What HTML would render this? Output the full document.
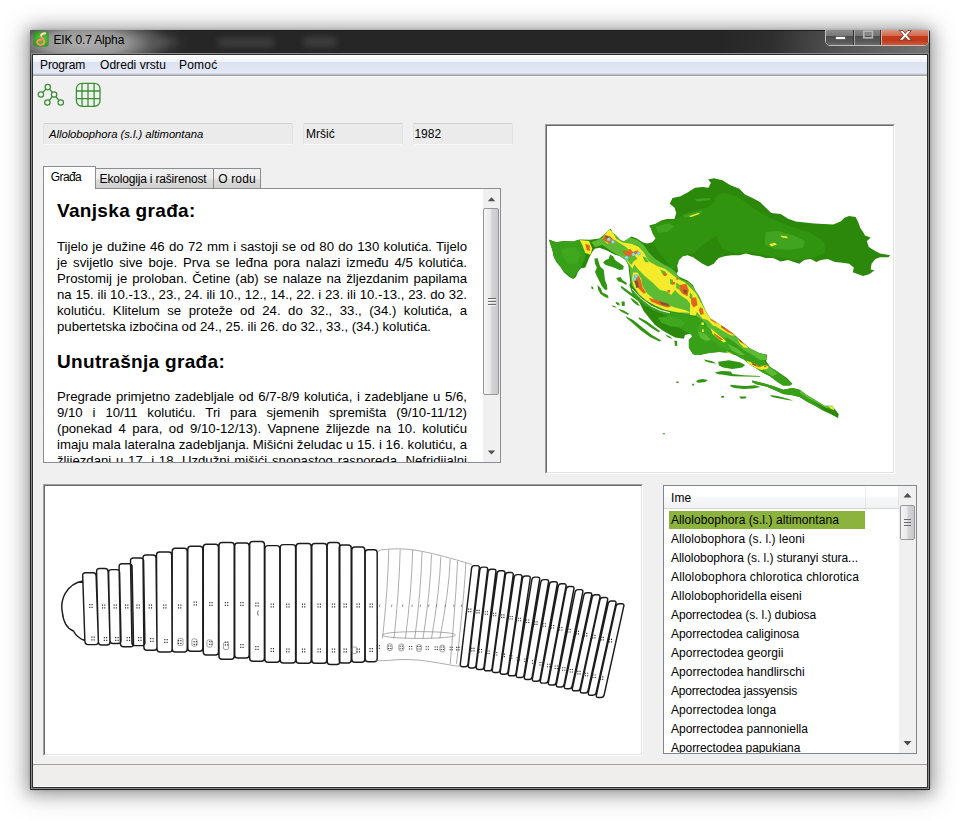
<!DOCTYPE html>
<html lang="hr">
<head>
<meta charset="utf-8">
<title>EIK 0.7 Alpha</title>
<style>
html,body{margin:0;padding:0;}
body{width:960px;height:821px;background:#fff;position:relative;overflow:hidden;font-family:"Liberation Sans",sans-serif;font-size:12px;color:#000;}
.abs{position:absolute;}
#shadow{left:31px;top:31px;width:898px;height:758px;box-shadow:0 0 3px 1px rgba(0,0,0,.18),0 1px 16px 4px rgba(0,0,0,.31),0 2px 30px 5px rgba(0,0,0,.16);border-radius:2px 2px 1px 1px;}
#win{left:30px;top:30px;width:900px;height:760px;background:#1f1f1f;border-radius:2px 2px 1px 1px;overflow:hidden;}
#frame2{left:1px;top:23px;width:896px;height:734px;border:1px solid #8c8c8c;}
#titlebar{left:1px;top:1px;width:898px;height:22px;background:#262626;border-radius:1px 1px 0 0;overflow:hidden;}
#glow{left:-50px;top:-18px;width:210px;height:62px;background:radial-gradient(closest-side at 50% 50%,rgba(188,188,188,.92) 0,rgba(165,165,165,.88) 40%,rgba(120,120,120,.68) 62%,rgba(70,70,70,.3) 84%,rgba(38,38,38,0) 100%);}
.smudge{background:#444;filter:blur(3px);border-radius:4px;}
#title{left:23.5px;top:3px;font-size:12px;letter-spacing:-.16px;color:#000;white-space:nowrap;}
#client{left:3px;top:25px;width:894px;height:732px;background:#f0f0f0;box-shadow:inset 1px 0 0 #fafafa,inset -1px 0 0 #fafafa;}
#client:after{content:"";position:absolute;left:0;bottom:0;width:894px;height:1px;background:#fff;}
#menubar{left:0;top:0;width:894px;height:22px;background:linear-gradient(to bottom,#fff 0,#f9fafd 3px,#eff2fa 7px,#dde2f2 7px,#e0e5f4 13px,#e6e9f6 18px,#d3d7e3 18px,#d3d7e3 19px,#bfc3cf 19px,#bfc3cf 20px,#a2a2a2 20px,#a2a2a2 21px,#f9f9f9 21px,#f9f9f9 22px);}
.mi{top:3px;font-size:12px;white-space:nowrap;letter-spacing:-.12px;}
.field{top:68px;height:22px;border:1px solid #e2e2e2;border-top-color:#cfcfcf;border-bottom-color:#f8f8f8;background:#ebebeb;box-sizing:border-box;border-radius:2px;line-height:20px;padding-left:5px;white-space:nowrap;}
.tab{box-sizing:border-box;border:1px solid #898c95;border-bottom:none;background:linear-gradient(#f2f2f2,#ebebeb 48%,#dddddd 52%,#cfcfcf);font-size:12px;white-space:nowrap;text-align:center;}
#textbox{left:10px;top:133px;width:458px;height:275px;background:#fff;border:1px solid #8a8d94;box-sizing:border-box;overflow:hidden;}
#text{left:13px;top:0;width:410px;font-size:13.2px;line-height:16px;}
#text h2{font-size:19px;letter-spacing:.32px;margin:0;font-weight:bold;line-height:22px;text-align:left;height:22px;}
#text p{margin:0;height:16px;text-align:justify;text-align-last:justify;white-space:nowrap;}
#text p.l{text-align-last:left;}
.sb{background:#f0f0f0;}
.thumb{box-sizing:border-box;border:1px solid #979797;border-radius:2px;background:linear-gradient(to right,#f5f5f5 0,#e9e9eb 45%,#d5d5d8 55%,#c8c8cc 100%);}
.sunken{box-sizing:border-box;border-style:solid;border-width:1px;border-color:#a0a0a0 #fff #fff #a0a0a0;}
.sunken>.in{position:absolute;left:0;top:0;right:0;bottom:0;box-sizing:border-box;border-style:solid;border-width:1px;border-color:#696969 #e3e3e3 #e3e3e3 #696969;background:#fff;overflow:hidden;}
#list{left:630px;top:430px;width:254px;height:269px;box-sizing:border-box;border:1px solid #828790;background:#fff;overflow:hidden;}
.li{left:7px;font-size:12px;white-space:nowrap;height:19px;line-height:18px;letter-spacing:.12px;}
#status{left:0;top:709px;width:894px;height:23px;background:#f0eeed;border-top:1px solid #a0a0a0;box-sizing:border-box;}
</style>
</head>
<body>
<div id="shadow" class="abs"></div>
<div id="win" class="abs">
 <div id="titlebar" class="abs">
  <div class="abs" style="left:690px;top:0;width:208px;height:22px;background:linear-gradient(100deg,rgba(110,110,110,0) 0,rgba(110,110,110,.12) 25%,rgba(110,110,110,.6) 55%,rgba(118,118,118,.95) 100%)"></div>
  <div class="abs smudge" style="left:124px;top:7px;width:22px;height:9px;opacity:.7"></div>
  <div class="abs smudge" style="left:187px;top:7px;width:56px;height:9px;opacity:.8"></div>
  <div class="abs smudge" style="left:272px;top:6px;width:34px;height:10px;opacity:.8"></div>
 </div>
 <div id="glow" class="abs"></div>
 <div id="frame2" class="abs"></div>
 <div class="abs" style="left:795px;top:-4px;width:104px;height:20px;border:1px solid #c0c0c0;border-radius:0 0 5px 5px;box-sizing:border-box;overflow:hidden;background:#444">
<div class="abs" style="left:0;top:0;width:102px;height:18px;border-radius:0 0 4px 4px;overflow:hidden;background:#333">
<div class="abs" style="left:0;top:0;width:27px;height:18px;background:linear-gradient(#a0a0a0 0,#8a8a8a 20%,#787878 48%,#4c4c4c 52%,#565656 80%,#6a6a6a 100%)"></div>
<div class="abs" style="left:28px;top:0;width:26px;height:18px;background:linear-gradient(#999 0,#868686 20%,#747474 48%,#4e4e4e 52%,#585858 80%,#6c6c6c 100%);border-left:1px solid #a4a4a4;box-sizing:border-box"></div>
<div class="abs" style="left:55px;top:0;width:47px;height:18px;background:linear-gradient(#e3a896 0,#d98a75 25%,#d2694f 48%,#c23c1c 52%,#c03a1a 75%,#d25a38 100%);border-left:1px solid #e8b0a0;box-sizing:border-box"></div>
</div>
<svg class="abs" style="left:0;top:0" width="102" height="18"><rect x="9.5" y="9.5" width="10" height="3" fill="#fff" stroke="#3a3a3a" stroke-width=".6"/><rect x="37.8" y="4.2" width="8.6" height="6.6" fill="none" stroke="#b4b4b4" stroke-width="1.7"/><rect x="39.5" y="6.3" width="5.2" height="2.2" fill="#8c8c8c"/><path d="M73.3 3.6h3.6l2.4 2.9 2.4-2.9h3.6l-4.2 4.7 4.4 4.9h-3.7l-2.5-3-2.5 3h-3.7l4.4-4.9z" fill="#fff" stroke="#5a2a20" stroke-width=".8"/></svg>
</div>
<svg class="abs" style="left:2.6px;top:1.3px" width="16.2" height="16" viewBox="0 0 16 16"><defs><radialGradient id="ig" cx="55%" cy="50%" r="60%"><stop offset="0" stop-color="#6ed052"/><stop offset=".6" stop-color="#3fae31"/><stop offset="1" stop-color="#2f9228"/></radialGradient></defs><rect x=".3" y=".3" width="15.4" height="15.4" rx="3.5" fill="url(#ig)"/><path d="M11.6 2.5C8.8 2.1 7.2 3.9 8.4 5.8 9.8 7.9 11.9 9.3 11.2 11.6 10.4 14.3 5.3 14.6 4.2 12.2 3.3 10.1 5.6 8.1 7.8 8.9" fill="none" stroke="#8a5a28" stroke-width="2.7" stroke-linecap="round" opacity=".55"/><path d="M11.6 2.5C8.8 2.1 7.2 3.9 8.4 5.8 9.8 7.9 11.9 9.3 11.2 11.6 10.4 14.3 5.3 14.6 4.2 12.2 3.3 10.1 5.6 8.1 7.8 8.9" fill="none" stroke="#f2a25c" stroke-width="1.9" stroke-linecap="round"/><path d="M11.6 2.5C9.4 2.2 8 3.2 8 4.6" fill="none" stroke="#fbeccd" stroke-width="1.8" stroke-linecap="round"/><circle cx="12.3" cy="2.4" r=".8" fill="#fff8e0"/></svg>
 <div id="title" class="abs">EIK 0.7 Alpha</div>
 <div class="abs" style="left:2px;top:24px;width:896px;height:734px;background:#2e2e2e"></div>
 <div id="client" class="abs">
  <div id="menubar" class="abs"></div>
  <div class="abs mi" style="left:7px">Program</div>
  <div class="abs mi" style="left:67px;letter-spacing:.05px">Odredi vrstu</div>
  <div class="abs mi" style="left:146px;letter-spacing:.2px">Pomoć</div>
  <svg class="abs" style="left:0;top:22px" width="80" height="34" viewBox="33 77 80 34"><g fill="#eef7ec" stroke="#3f8d39" stroke-width="1.25"><path d="M47.8 87.1L40.9 94.5M47.8 87.1L54.1 94.5L47.4 102.5M54.1 94.5L60.75 102.5" fill="none"/><circle cx="47.8" cy="87.1" r="2.7"/><circle cx="40.9" cy="94.5" r="2.7"/><circle cx="54.1" cy="94.5" r="2.7"/><circle cx="47.4" cy="102.5" r="2.7"/><circle cx="60.75" cy="102.5" r="2.7"/></g><g fill="none" stroke="#3f8d39" stroke-width="1.3"><rect x="76.4" y="83.3" width="23.6" height="23" rx="5.5" fill="#edf6eb"/><path d="M82 83.3v23M88 83.3v23M94.1 83.3v23M76.4 91h23.6M76.4 98.7h23.6"/></g></svg>

  <div class="abs field" style="left:10px;width:250px;font-style:italic;font-size:11.3px;letter-spacing:-.05px">Allolobophora (s.l.) altimontana</div>
  <div class="abs field" style="left:270px;width:100px;font-size:12px;padding-left:2px">Mršić</div>
  <div class="abs field" style="left:380px;width:100px;font-size:12px;padding-left:.4px">1982</div>

  <div class="abs tab" style="left:62px;top:113px;width:119px;height:21px;line-height:20px;letter-spacing:-.18px;padding-right:3px">Ekologija i raširenost</div>
  <div class="abs tab" style="left:180px;top:113px;width:48px;height:21px;line-height:20px;letter-spacing:.15px">O rodu</div>
  <div id="textbox" class="abs">
   <div id="text" class="abs">
    <h2 style="margin-top:11px">Vanjska građa:</h2>
    <div style="height:16.6px"></div>
    <p>Tijelo je dužine 46 do 72 mm i sastoji se od 80 do 130 kolutića. Tijelo</p>
    <p>je svijetlo sive boje. Prva se leđna pora nalazi između 4/5 kolutića.</p>
    <p>Prostomij je proloban. Četine (ab) se nalaze na žljezdanim papilama</p>
    <p>na 15. ili 10.-13., 23., 24. ili 10., 12., 14., 22. i 23. ili 10.-13., 23. do 32.</p>
    <p>kolutiću. Klitelum se proteže od 24. do 32., 33., (34.) kolutića, a</p>
    <p class="l">pubertetska izbočina od 24., 25. ili 26. do 32., 33., (34.) kolutića.</p>
    <h2 style="margin-top:16px">Unutrašnja građa:</h2>
    <div style="height:16.3px"></div>
    <p>Pregrade primjetno zadebljale od 6/7-8/9 kolutića, i zadebljane u 5/6,</p>
    <p>9/10 i 10/11 kolutiću. Tri para sjemenih spremišta (9/10-11/12)</p>
    <p>(ponekad 4 para, od 9/10-12/13). Vapnene žlijezde na 10. kolutiću</p>
    <p>imaju mala lateralna zadebljanja. Mišićni želudac u 15. i 16. kolutiću, a</p>
    <p>žlijezdani u 17. i 18. Uzdužni mišići snopastog rasporeda. Nefridijalni</p>
    <p class="l">mjehuri U-oblika.</p>
   </div>
   <div class="abs sb" style="left:439px;top:0;width:17px;height:273px"></div>
   <div class="abs thumb" style="left:439px;top:19px;width:16px;height:187px"></div>
   <svg class="abs" style="left:439px;top:0" width="17" height="273"><path d="M4.8 12.3L8.5 8.2 12.2 12.3z M4.8 261.4L12.2 261.4 8.5 265.5z" fill="#505050"/><path d="M5 109.5h8M5 112.5h8M5 115.5h8" stroke="#6b6b6b" stroke-width="1"/><path d="M5 110.5h8M5 113.5h8M5 116.5h8" stroke="#fff" stroke-width="1" opacity=".7"/></svg>
  </div>
  <div class="abs tab" style="left:10px;top:111px;width:53px;height:23px;line-height:20px;background:#fff;letter-spacing:-.6px;padding-right:7px">Građa</div>

  <div class="abs sunken" style="left:512px;top:69px;width:350px;height:350px"><div class="in"><svg class="abs" style="left:0;top:0" width="346" height="346" viewBox="547 126 346 346"><defs><clipPath id="cl"><path d="M548.8 239.4L556.3 242.2L563.8 240.9L573.1 241.6L579.7 239.4L590 239.8L599.4 238.4L603.1 235.6L606.9 231.9L610.6 228.7L612.9 232.8L616.3 235.6L620 239.8L623.8 241.6L628.4 238.4L631.6 236.6L636.9 238.4L642.5 242.2L647.2 243.5L652.3 242.2L655.6 238.4L652.8 233.8L650.9 228.5L649.1 225.5L655.6 223.8L661.3 220.6L666.9 219.1L674.4 219.1L676.3 213.1L674.4 207.5L669.7 203.8L672.5 198.1L680 196.6L687.5 192.5L695 187.8L702.5 186.9L708.5 187.8L710.9 182.8L708.1 179.4L713.8 178.3L715 178.4L722.5 180.3L730 185L739.4 188.8L745 194.4L752.5 198.1L760 201.9L765.6 207.5L771.3 213.1L780.6 214.1L788.1 218.8L795.6 221.6L805 222.5L814.4 223.4L823.8 224L833.1 224.4L840.6 221.6L844.4 217.8L849.1 215.9L855.6 216.9L858.4 222.5L860.3 228.1L863.1 231.9L865 235.6L870.6 237.5L866.9 241.3L868.8 246.9L874.4 250.6L880 253.4L890.3 255.3L888.4 257.2L880 257.2L875.3 259.1L871.6 263.8L870.6 269.4L874.4 270.3L869.7 274.1L863.1 275.9L857.5 274.1L852.8 272.2L853.8 267.5L849.1 263.8L842.5 262.8L835 261.9L827.5 259.1L820.9 260L816.3 261.9L810.6 259.1L804.1 260L799.4 263.8L793.8 261.9L788.1 260L780.6 261.5L773.1 258.1L765.6 258.1L760 256.3L752.5 255.3L745.9 253.4L739.4 255.3L731.9 255.3L724.4 256.3L718.8 258.1L715 261.9L713.8 263.8L708.1 266.6L702.5 263.8L696.9 260L693.1 257.2L687.5 255.3L682.8 256.3L679.1 260L677.2 265.6L678.1 271.3L676.3 274.1L680 277.3L687.5 280.6L693.1 285.3L695 290L698.8 295.6L701.6 301.3L704.4 308.8L708.1 316.3L698.8 295.6L704.4 308.8L710 318.1L721.3 325.6L732.5 333.1L741.9 341.6L749.4 348.1L758.8 352.8L767.2 354.7L766.3 361.3L770 366.9L777.5 371.6L786.9 378.1L792.5 383.8L789.7 385.6L783.1 385.6L777.5 381.9L770 376.3L762.5 372.5L756.9 368.8L749.4 364.1L743.8 359.4L736.3 355.6L728.8 352.8L719.4 351.9L710 352.8L700.6 354.7L695 354.7L695 355L692.5 353.8L688.8 347.5L688.8 340L692.5 336.2L690 333.8L685 335L683.8 338.8L675 337.5L663.8 331.2L655 325L648.8 317.5L643.8 311.2L638.8 301.2L632.5 293.8L629.4 285L630.3 282.5L629.4 275L628.4 265.6L625.6 260L620 256.3L614.4 254.4L606.9 250.6L599.4 247.8L594.7 248.8L591.9 252.5L589.1 258.1L587.2 262.8L585.3 267.5L580.6 268.4L577.8 272.2L575.9 276.9L573.1 279.1L569.4 276.9L563.8 272.2L560.9 267.5L556.3 261.9L553.4 256.3L552.5 250.6L550.6 245ZM752.2 380.6L760.6 382.4L773.8 386.2L783.1 389.8L792.5 387.9L800 389.8L806 394.4L815.4 400.1L824.4 405.7L831.9 405.7L835.1 409.6L838.8 414.3L837.9 417.9L830 413.8L822.5 410.2L815 405.7L807.5 401.9L800 397.3L792.5 395.2L783.1 393.9L775.6 390.5L766.3 386.6L756.9 384.5L752.2 382.3Z"/></clipPath></defs><path d="M548.8 239.4L556.3 242.2L563.8 240.9L573.1 241.6L579.7 239.4L590 239.8L599.4 238.4L603.1 235.6L606.9 231.9L610.6 228.7L612.9 232.8L616.3 235.6L620 239.8L623.8 241.6L628.4 238.4L631.6 236.6L636.9 238.4L642.5 242.2L647.2 243.5L652.3 242.2L655.6 238.4L652.8 233.8L650.9 228.5L649.1 225.5L655.6 223.8L661.3 220.6L666.9 219.1L674.4 219.1L676.3 213.1L674.4 207.5L669.7 203.8L672.5 198.1L680 196.6L687.5 192.5L695 187.8L702.5 186.9L708.5 187.8L710.9 182.8L708.1 179.4L713.8 178.3L715 178.4L722.5 180.3L730 185L739.4 188.8L745 194.4L752.5 198.1L760 201.9L765.6 207.5L771.3 213.1L780.6 214.1L788.1 218.8L795.6 221.6L805 222.5L814.4 223.4L823.8 224L833.1 224.4L840.6 221.6L844.4 217.8L849.1 215.9L855.6 216.9L858.4 222.5L860.3 228.1L863.1 231.9L865 235.6L870.6 237.5L866.9 241.3L868.8 246.9L874.4 250.6L880 253.4L890.3 255.3L888.4 257.2L880 257.2L875.3 259.1L871.6 263.8L870.6 269.4L874.4 270.3L869.7 274.1L863.1 275.9L857.5 274.1L852.8 272.2L853.8 267.5L849.1 263.8L842.5 262.8L835 261.9L827.5 259.1L820.9 260L816.3 261.9L810.6 259.1L804.1 260L799.4 263.8L793.8 261.9L788.1 260L780.6 261.5L773.1 258.1L765.6 258.1L760 256.3L752.5 255.3L745.9 253.4L739.4 255.3L731.9 255.3L724.4 256.3L718.8 258.1L715 261.9L713.8 263.8L708.1 266.6L702.5 263.8L696.9 260L693.1 257.2L687.5 255.3L682.8 256.3L679.1 260L677.2 265.6L678.1 271.3L676.3 274.1L680 277.3L687.5 280.6L693.1 285.3L695 290L698.8 295.6L701.6 301.3L704.4 308.8L708.1 316.3L698.8 295.6L704.4 308.8L710 318.1L721.3 325.6L732.5 333.1L741.9 341.6L749.4 348.1L758.8 352.8L767.2 354.7L766.3 361.3L770 366.9L777.5 371.6L786.9 378.1L792.5 383.8L789.7 385.6L783.1 385.6L777.5 381.9L770 376.3L762.5 372.5L756.9 368.8L749.4 364.1L743.8 359.4L736.3 355.6L728.8 352.8L719.4 351.9L710 352.8L700.6 354.7L695 354.7L695 355L692.5 353.8L688.8 347.5L688.8 340L692.5 336.2L690 333.8L685 335L683.8 338.8L675 337.5L663.8 331.2L655 325L648.8 317.5L643.8 311.2L638.8 301.2L632.5 293.8L629.4 285L630.3 282.5L629.4 275L628.4 265.6L625.6 260L620 256.3L614.4 254.4L606.9 250.6L599.4 247.8L594.7 248.8L591.9 252.5L589.1 258.1L587.2 262.8L585.3 267.5L580.6 268.4L577.8 272.2L575.9 276.9L573.1 279.1L569.4 276.9L563.8 272.2L560.9 267.5L556.3 261.9L553.4 256.3L552.5 250.6L550.6 245ZM752.2 380.6L760.6 382.4L773.8 386.2L783.1 389.8L792.5 387.9L800 389.8L806 394.4L815.4 400.1L824.4 405.7L831.9 405.7L835.1 409.6L838.8 414.3L837.9 417.9L830 413.8L822.5 410.2L815 405.7L807.5 401.9L800 397.3L792.5 395.2L783.1 393.9L775.6 390.5L766.3 386.6L756.9 384.5L752.2 382.3Z" fill="#2b880a"/><path d="M718.1 361.8L728.8 360.3L740 362.2L745.1 365L742.3 367.6L732.5 368.9L723.1 367.4L719 365.4ZM704.4 359.8L711.9 360.9L715.6 363.5L710.9 363.1L705.3 361.3ZM715.6 372.5L723.1 371L730.6 371.6L732.5 374L743.8 375.3L760.6 375.9L759.7 376.8L743.8 376.6L732.5 376.3L723.1 374.8L716.6 373.8ZM696.9 380L702.5 379.1L707.8 380L705.3 381.9L699.7 382.4ZM730.3 384.7L738.1 385.6L745.6 386L755 385.3L760.6 387.1L753.1 388.4L743.8 389L734.4 387.9L730.6 386.6ZM739.1 396.5L746.6 396.5L745.6 398.4L740.9 398.8ZM770 395L777.5 395.9L786.9 398.4L793.4 400.6L788.8 400.3L779.4 398.4L771.9 396.9ZM721.8 396.3L723.5 396.3L723.5 397.6L721.8 397.6ZM610 254.4L613.1 256.2L615 260L619.4 263.1L623.8 266.2L623.1 269.4L619.4 270L615 268.1L610 266.2L605.6 265L603.1 262.5L605.6 260L608.8 258.8ZM594.4 258.8L597.5 258.1L598.8 261.9L600 266.2L603.8 270L604.4 275L605 280L606.9 285L607.5 289.4L605 290L601.9 286.2L599.4 281.2L596.9 276.2L595 271.9L596.9 267.5L595 263.8ZM597.5 285L600.6 288.1L602.5 292.5L607.5 295L608.8 297.5L605 296.9L601.2 293.8L598.1 290ZM616.2 278.1L620.6 276.9L622.5 280L626.9 283.1L626.2 285L621.9 282.5L618.1 281.2ZM620.6 285.6L624.4 288.1L628.8 291.2L632.5 293.8L637.5 297.5L642.5 301.2L647.5 305.6L645 306.2L640 302.5L635 298.8L630 295L625 291.2L621.2 288.1ZM630 297.5L633.8 299.4L637.5 302.5L640 306.2L636.9 305L633.1 301.9ZM591.2 286.2L593.1 286.9L593.5 289.4L591.5 288.8ZM615.6 301.9L618.1 302.5L618.5 304.4L616.2 304ZM621.9 301.9L624 301.5L624.4 305L622.2 305ZM611.2 305L615 306.2L616.9 307.5L613.8 307.2ZM618.1 308.8L622.5 310.6L627.5 313.1L629.4 314.4L625 313.5L620.6 311.2ZM625.6 316.3L633.1 320L642.5 327.5L651.9 335L661.3 340.6L659.4 341.6L650 336.9L640.6 330.3L632.2 322.8L626.6 318.1ZM638.8 317.2L646.3 320.9L653.8 326.6L660.3 331.3L658.4 332.2L650.9 327.5L644.4 322.8L638.8 319.1ZM618.1 308.8L623.8 310.6L629.4 314L627.5 314.8L621.9 312.1ZM616.3 302.2L619.1 302.8L619.6 305.4L617.2 305ZM621.5 301.6L624.7 301.6L624.7 305.9L621.9 305.9ZM598.4 290L601.3 291.9L606.9 295.6L607.8 298.4L604.1 296.6L600.3 293.8ZM674.4 340.6L677.2 341L677.2 346.3L674.8 345.5ZM665 334.1L670.6 336.9L672.5 339.1L667.8 337.3ZM695.9 380.9L702.5 379.1L707.8 380L704.4 382.3L697.8 382.8ZM676.3 381.5L678.5 381.5L678.5 383L676.3 383ZM692.2 383.8L694.1 383.8L694.1 385.6L692.2 385.6ZM704.4 359.4L711.9 361.3L716.6 363.5L710 362.8L705.3 360.9ZM714.7 372.5L721.3 371L725 371.8L725 374.4L719.4 374.4ZM662.2 433.4L665 432.9L664.3 434.8ZM721.3 395.9L724.1 395.9L724.1 397.8L721.3 397.8Z" fill="#319612"/><g clip-path="url(#cl)"><path d="M650 226.3L661.3 221.6L674.4 220.3L683.8 214.1L695 210.3L708.1 207.5L719.4 198.1L725 198.1L725 231.9L713.8 237.5L702.5 245L695 252.5L687.5 254.4L680 257.2L676.3 263.8L674.4 271.3L665 260L657.5 250.6L652.8 243.1L656 238.4L652.8 233.8ZM722.5 192.5L737.5 196.3L752.5 207.5L771.3 218.8L790 226.3L808.8 231.9L823.8 241.3L825.6 252.5L812.5 258.1L793.8 260L771.3 256.3L752.5 252.5L733.8 252.5L722.5 248.8L715 231.9L715 198.1Z" fill="#30940e"/><path d="M683.8 215L695 212.2L702.5 210.3L701.6 212.8L693.1 215.9L684.7 217.8ZM695 199.1L710 198.1L710 200L696.9 201.5ZM765.6 231.9L778.8 230.9L793.8 235.6L805 241.3L803.1 247.8L790 249.7L775 248.8L764.7 245ZM655.6 226.3L668.8 223.4L674.4 226.3L666.9 231.9L657.5 232.8Z" fill="#40a420"/><path d="M548.8 239.8L563.8 241.3L578.8 239.8L585.3 245L585.3 258.1L580.6 267.5L573.1 277.8L563.8 271.3L554.4 258.1ZM667.5 313.1L680 314.4L695 317.5L710 321.2L757.5 355L832.5 417.5L832.5 442.5L695 357.5L688.8 347.5L688.8 340L690 333.8L682.5 330L672.5 321.2ZM631.2 290L640 297.5L648.8 303.1L660 308.8L672.5 312.5L685 314L697.5 317.5L702.5 323.8L677.5 320L652.5 310L637.5 300L631.2 295Z" fill="#38a018"/><path d="M561.9 248.8L575 246.9L580.6 254.4L576.9 263.8L567.5 263.8L562.8 256.3ZM657.5 317.5L670 316.2L680 318.8L685 323.8L680 327.5L670 326.2L661.2 322.5ZM700 325L715 330L725 338.8L732.5 347.5L727.5 350L715 342.5L705 335L697.5 330Z" fill="#3fa81f"/><path d="M591.2 241.9L597.5 240L602.5 237.5L608.8 228.8L615 233.8L622.5 238.8L630 237.5L637.5 240L643.8 245L648.8 252.5L655 258.8L662.5 263.8L670 267.5L677.5 273.8L680 278.8L688.8 282.5L696.2 290L700 297.5L706.2 307.5L713.8 317.5L725 327.5L720 330L712.5 328.8L706.2 322.5L696.2 316.2L685 313.8L672.5 311.9L660 308.1L648.8 301.9L640 295.6L631.9 285.6L630.6 276.2L629.4 265.6L622.5 258.1L612.5 251.9L602.5 245L595 246.9ZM695 290L701.2 300L706.2 313.8L715 321.2L727.5 330L740 340L748.8 347.5L757.5 352.5L766.2 355L766.9 360L760 360L752.5 355L743.8 350L735 342.5L725 336.2L715 330L707.5 325L701.2 318.8L696.2 308.8L691.2 297.5L690 290ZM707.5 321.2L720 327.5L727.5 336.2L725 338.8L715 332.5L706.2 326.2ZM697.5 331.2L705 333.8L711.2 340L706.2 341.2L700 337.5ZM727.5 343.8L737.5 348.8L745 355L740 355L731.2 350ZM760 365L770 367.5L777.5 373.8L772.5 376.2L765 371.2ZM800 389.9L807.5 395L816.9 400.6L826.3 405.9L832.8 406.3L834.7 409.6L826.3 408.1L816.9 403.1L807.5 398L800 393.1Z" fill="#5cba33"/><path d="M602.5 238.8L608.8 229L613.1 232.5L616.2 238.8L622.5 242.5L631.2 243.8L638.8 246.9L643.8 252.5L648.8 261.2L657.5 266.2L665 268.8L671.2 273.8L677.5 278.8L685 282.5L690 287.5L696.2 293.8L700 301.2L705 310L710 317.5L715 320L720 326.2L713.8 326.2L707.5 320L702.5 318.8L697.5 312.5L692.5 307.5L687.5 300L680 295L675 290L671.2 295L666.2 291.2L663.8 282.5L660 276.2L652.5 271.2L645 266.2L637.5 258.8L635 262.5L632.5 268.8L628.8 263.8L625 257.5L618.8 253.8L613.8 248.8L607.5 243.8ZM633.1 272.5L637.5 272.5L641.2 278.8L642.5 286.2L647.5 293.8L655 300L665 303.8L675 307.5L685 310L691.2 312.8L677.5 312.2L665 309.8L655 305.4L646.2 300.4L638.8 294.1L633.8 286.6L631.9 278.8ZM607.5 243.8L613.8 248.8L618.8 253.8L626.2 258.8L631.2 265L633.8 261.2L637.5 258.8L631.2 251.2L622.5 245L615 240ZM637.5 258.8L645 266.2L652.5 271.2L660 276.2L663.8 282.5L666.2 291.2L660 290L652.5 282.5L645 276.2L638.8 270L633.8 263.8ZM579.7 240.1L589.1 240.9L592.3 248.8L590.4 254.8L585.3 252.9L582.5 245.4ZM640 257.5L646.2 261.2L652.5 267.5L650 269.4L643.8 263.8L639.4 260ZM690 295L693.8 296.2L696.9 303.8L697.5 310L695.6 315.6L690 315ZM697.5 306.2L703.8 308.8L705.6 315L701.9 316.9L698.1 312.5ZM708.8 318.1L715 320.6L722.5 325.6L731.2 331.2L735 335.6L731.2 335.6L725 331.9L717.5 327.5L710 321.2ZM710.6 328.1L715 331.9L722.5 338.1L726.2 341.2L723.8 342.5L717.5 338.1L712.5 333.8ZM738.1 339.4L742.5 341.9L747.5 346.2L748.1 348.1L743.8 347.5L739.4 343.1ZM726.2 351.2L731.2 353.1L734.4 355.6L731.2 355.6L726.9 353.1ZM746.2 360.6L755 363.8L760 366.9L765 365L768.8 366.2L767.5 368.8L761.2 370L755 367.5L747.5 363.1ZM701.9 329.4L703.8 329.4L703.8 331.9L701.9 331.9ZM828.5 405.9L833.4 406.6L834.1 410L830.9 409.1ZM701.2 322.5L703.8 322.5L704 325L701.5 325ZM769.4 244.1L775 242.8L776.9 244.6L771.3 246.5ZM780.6 235.6L787.2 236.6L787.8 238.3L781.6 237.5ZM689.4 215.9L698.8 212.8L699.7 213.9L690.3 217.3Z" fill="#f4ec2a"/><path d="M618.8 245L623.8 245.6L627.5 248.8L622.5 249.4ZM642.5 256.2L646.2 257.5L648.8 262.5L645 261.9ZM660 269.4L665 271.2L667.5 275L663.1 275ZM676.2 282.5L680 285L679.4 290L676.2 288.1ZM690 292.5L692.5 295L691.9 300L689.4 297.5ZM670 278.8L673.1 280L672.5 285L670 283.8ZM700 306.2L702.5 310L701.9 315L699.4 311.2Z" fill="#5cba33"/><path d="M605 235L610 236.2L615 241.2L613.8 244.4L607.5 242.5L602.5 239.4ZM621.9 250.6L627.5 251.2L630 248.8L633.1 251.9L637.5 250L638.1 252.8L632.5 256.5L626.2 255.9ZM633.8 275L638.8 275.6L641.2 281.2L642.5 287.5L646.2 292.5L643.8 293.8L638.8 288.8L634.4 282.5ZM648.8 297.8L657.5 300.2L665 302.5L671.2 306.2L667.5 307.5L660 305.2L651.2 301.5ZM680 285L686.2 283.8L688.8 290L687.5 296.2L682.5 293.8L679.4 290ZM691.2 297.5L696.2 297.5L697.5 305L693.8 307.5L691.2 303.8ZM698.8 308.8L702.5 308.1L703.8 313.8L700.6 315ZM585.3 244.1L589.6 245L590 251L586.6 249.9ZM663.5 273.1L666.2 273.1L666.5 275.9L663.8 275.9ZM671.9 281.9L675 281.9L675 284.4L671.9 284.4ZM667.5 290L670 290L670 292.5L667.5 292.5ZM676.2 277.8L678.1 277.8L678.1 279.8L676.2 279.8ZM691.2 297.5L695 301.2L695.6 306.2L692.5 306.2ZM698.8 308.8L702.5 310L703.1 314.4L700 313.8ZM710 318.5L716.2 321.9L716.9 323.8L711.2 320.6ZM721.2 325.6L727.5 328.8L733.8 333.1L734.4 335L727.5 331.9L721.2 327.5ZM713.8 333.1L721.2 338.1L723.1 340L720.6 340L714.4 335ZM738.8 339.4L745 343.8L745.6 345L740 341.9ZM751.2 362.5L758.8 365.6L759.4 367.5L752.5 364.8ZM763.8 365.6L766.2 365.6L766.2 367.2L764 367.2Z" fill="#e0671c"/><path d="M634.4 280L638.1 281.2L638.8 287.5L636.2 288.1ZM658.8 301.5L667.5 303.4L670 306.2L662.5 305.1ZM683.1 289.4L686.9 290L686.9 293.8L683.8 293.1ZM605.2 236L608.8 236.6L609 238.8L605.6 238.5ZM721.2 325.4L726.2 327.5L727.5 329.4L722.8 327.5ZM739 339.4L743.1 341.9L742.5 342.8L739.4 340.6ZM752.5 363.1L756.2 364.8L755.6 365.8L752.5 364.4Z" fill="#7a5733"/></g><path d="M631.9 288.8L640 297.5L651.2 306.2L661.2 310.6L670 312.8" fill="none" stroke="#fff" stroke-width="1"/><g fill="#86e3f2" stroke="#58b7cc" stroke-width=".5"><circle cx="608.8" cy="239.4" r="1.7"/><circle cx="612.8" cy="241.9" r="1.7"/><circle cx="626.6" cy="257.5" r="1.7"/><circle cx="633.4" cy="254.4" r="1.7"/><circle cx="638.8" cy="253.5" r="1.7"/><circle cx="636" cy="276.2" r="1.7"/><circle cx="634.4" cy="279" r="1.7"/></g></svg></div></div>
  <div class="abs sunken" style="left:10px;top:429px;width:600px;height:272px"><div class="in"><svg class="abs" style="left:0;top:0" width="596" height="268" viewBox="45 486 596 268"><path d="M83 581 C66 584 60 600 62.3 612 C63.5 624 68 629 73.5 631 C76 636 80 639 85 640.5M85.5 572.7L93 572.7Q96 572.7 96.1 575.7L98.4 641.6Q98.5 644.6 95.5 644.6L88 644.6Q85 644.6 84.9 641.6L82.7 575.7Q82.5 572.7 85.5 572.7ZM99.5 568.5L105 568.5Q108 568.5 108.1 571.5L110 642Q110 645 107 645L101.5 645Q98.5 645 98.4 642L96.6 571.5Q96.5 568.5 99.5 568.5ZM111.5 569.6L116.5 569.6Q119.5 569.6 119.6 572.6L121 640.5Q121 643.5 118 643.5L113 643.5Q110 643.5 110 640.5L108.6 572.6Q108.5 569.6 111.5 569.6ZM122 563.8L129.1 563.8Q132.1 563.8 132.1 566.8L133.5 643.7Q133.6 646.7 130.6 646.7L123.5 646.7Q120.5 646.7 120.4 643.7L119.1 566.8Q119 563.8 122 563.8ZM133.4 558L140.5 558Q143.5 558 143.6 561L144.9 642.6Q145 645.6 142 645.6L134.9 645.6Q131.9 645.6 131.9 642.6L130.5 561Q130.4 558 133.4 558ZM145.9 555L153 555Q156 555 156 558L157 647.2Q157 650.2 154 650.2L146.9 650.2Q143.9 650.2 143.9 647.2L143 558Q142.9 555 145.9 555ZM159.5 551.9L168.7 551.9Q171.7 551.9 171.7 554.9L172.1 648.9Q172.2 651.9 169.2 651.9L160 651.9Q157 651.9 157 648.9L156.5 554.9Q156.5 551.9 159.5 551.9ZM175.2 548.3L184.2 548.3Q187.2 548.3 187.2 551.3L187.2 648.9Q187.2 651.9 184.2 651.9L175.2 651.9Q172.2 651.9 172.2 648.9L172.2 551.3Q172.2 548.3 175.2 548.3ZM190.8 546.2L199.8 546.2Q202.8 546.2 202.8 549.2L202.8 648.2Q202.8 651.2 199.8 651.2L190.8 651.2Q187.8 651.2 187.8 648.2L187.8 549.2Q187.8 546.2 190.8 546.2ZM206.3 544.2L215.5 544.2Q218.5 544.2 218.5 547.2L218.5 652Q218.5 655 215.5 655L206.3 655Q203.3 655 203.3 652L203.3 547.2Q203.3 544.2 206.3 544.2ZM222 542.5L231.2 542.5Q234.2 542.5 234.2 545.5L234.2 656.2Q234.2 659.2 231.2 659.2L222 659.2Q219 659.2 219 656.2L219 545.5Q219 542.5 222 542.5ZM237.7 543L246.2 543Q249.2 543 249.2 546L249.2 655Q249.2 658 246.2 658L237.7 658Q234.7 658 234.7 655L234.7 546Q234.7 543 237.7 543ZM252.7 541.5L261.4 541.5Q264.4 541.5 264.4 544.5L264.4 658.2Q264.4 661.2 261.4 661.2L252.7 661.2Q249.7 661.2 249.7 658.2L249.7 544.5Q249.7 541.5 252.7 541.5ZM267.9 545.6L276.8 545.6Q279.8 545.6 279.8 548.6L279.8 659.3Q279.8 662.3 276.8 662.3L267.9 662.3Q264.9 662.3 264.9 659.3L264.9 548.6Q264.9 545.6 267.9 545.6ZM283.2 544.6L292.6 544.6Q295.6 544.6 295.6 547.6L295.6 660Q295.6 663 292.6 663L283.2 663Q280.2 663 280.2 660L280.2 547.6Q280.2 544.6 283.2 544.6ZM299.1 543.5L308.2 543.5Q311.2 543.5 311.2 546.5L311.2 660.3Q311.2 663.3 308.2 663.3L299.1 663.3Q296.1 663.3 296.1 660.3L296.1 546.5Q296.1 543.5 299.1 543.5ZM314.8 543.5L323.8 543.5Q326.8 543.5 326.8 546.5L326.8 660.3Q326.8 663.3 323.8 663.3L314.8 663.3Q311.8 663.3 311.8 660.3L311.8 546.5Q311.8 543.5 314.8 543.5ZM330.2 542.5L336.8 542.5Q339.8 542.5 339.8 545.5L339.8 661.4Q339.8 664.4 336.8 664.4L330.2 664.4Q327.2 664.4 327.2 661.4L327.2 545.5Q327.2 542.5 330.2 542.5ZM342.2 545L348.2 545Q351.2 545 351.2 548L351.2 660Q351.2 663 348.2 663L342.2 663Q339.2 663 339.2 660L339.2 548Q339.2 545 342.2 545ZM354.8 547L361.8 547Q364.8 547 364.8 550L364.8 659.3Q364.8 662.3 361.8 662.3L354.8 662.3Q351.8 662.3 351.8 659.3L351.8 550Q351.8 547 354.8 547ZM368.2 549.8L374.2 549.8Q377.2 549.8 377.2 552.8L377.2 658.7Q377.2 661.7 374.2 661.7L368.2 661.7Q365.2 661.7 365.2 658.7L365.2 552.8Q365.2 549.8 368.2 549.8ZM474.4 565.6L477.1 565.6Q479.6 565.6 479.3 568.1L468 664.2Q467.7 666.7 465.2 666.7L462.5 666.7Q460 666.7 460.3 664.2L471.6 568.1Q471.9 565.6 474.4 565.6ZM482.7 567.1L485.4 567.1Q487.9 567.1 487.6 569.6L476 665.4Q475.7 667.9 473.2 667.9L470.5 667.9Q468 667.9 468.3 665.4L479.9 569.6Q480.2 567.1 482.7 567.1ZM491 569.2L493.7 569.2Q496.2 569.2 495.9 571.7L484 666.9Q483.7 669.4 481.2 669.4L478.5 669.4Q476 669.4 476.3 666.9L488.2 571.7Q488.5 569.2 491 569.2ZM500 570.8L502.7 570.8Q505.2 570.8 504.9 573.3L492 668.3Q491.7 670.8 489.2 670.8L486.5 670.8Q484 670.8 484.3 668.3L497.2 573.3Q497.5 570.8 500 570.8ZM508.3 572.5L511 572.5Q513.5 572.5 513.2 575L500 670Q499.7 672.5 497.2 672.5L494.5 672.5Q492 672.5 492.3 670L505.5 575Q505.8 572.5 508.3 572.5ZM517.1 574.6L519.8 574.6Q522.3 574.6 521.9 577.1L508 671.7Q507.6 674.2 505.1 674.2L502.4 674.2Q499.9 674.2 500.3 671.7L514.2 577.1Q514.6 574.6 517.1 574.6ZM525.4 576L528.1 576Q530.6 576 530.2 578.5L516 673.3Q515.6 675.8 513.1 675.8L510.4 675.8Q507.9 675.8 508.3 673.3L522.5 578.5Q522.9 576 525.4 576ZM534.8 577.1L537.5 577.1Q540 577.1 539.6 579.6L524 675Q523.6 677.5 521.1 677.5L518.4 677.5Q515.9 677.5 516.3 675L531.9 579.6Q532.3 577.1 534.8 577.1ZM543.8 579.6L546.5 579.6Q549 579.6 548.5 582.1L532.1 676.9Q531.6 679.4 529.1 679.4L526.4 679.4Q523.9 679.4 524.4 676.9L540.8 582.1Q541.2 579.6 543.8 579.6ZM552.5 581.7L555.2 581.7Q557.7 581.7 557.2 584.2L540.1 678.8Q539.6 681.2 537.1 681.2L534.4 681.2Q531.9 681.2 532.4 678.8L549.5 584.2Q550 581.7 552.5 581.7ZM561.2 583.8L564 583.8Q566.5 583.8 566 586.2L548.1 680.6Q547.6 683.1 545.1 683.1L542.4 683.1Q539.9 683.1 540.4 680.6L558.3 586.2Q558.8 583.8 561.2 583.8ZM569.2 586.5L571.9 586.5Q574.4 586.5 573.9 589L556.1 682.5Q555.6 685 553.1 685L550.4 685Q547.9 685 548.4 682.5L566.2 589Q566.7 586.5 569.2 586.5ZM578.1 589.6L580.8 589.6Q583.3 589.6 582.8 592.1L564.1 684.4Q563.6 686.9 561.1 686.9L558.4 686.9Q555.9 686.9 556.4 684.4L575.1 592.1Q575.6 589.6 578.1 589.6ZM586.9 592.7L589.6 592.7Q592.1 592.7 591.6 595.2L572.1 686.2Q571.6 688.8 569.1 688.8L566.4 688.8Q563.9 688.8 564.4 686.2L583.9 595.2Q584.4 592.7 586.9 592.7ZM595.2 594.8L597.9 594.8Q600.4 594.8 599.9 597.3L580.1 688.3Q579.6 690.8 577.1 690.8L574.4 690.8Q571.9 690.8 572.4 688.3L592.2 597.3Q592.7 594.8 595.2 594.8ZM602.9 597.5L605.6 597.5Q608.1 597.5 607.6 600L588.1 690.4Q587.6 692.9 585.1 692.9L582.4 692.9Q579.9 692.9 580.4 690.4L599.9 600Q600.4 597.5 602.9 597.5ZM611.2 601L614 601Q616.5 601 615.9 603.5L596.1 692.7Q595.5 695.2 593 695.2L590.3 695.2Q587.8 695.2 588.4 692.7L608.2 603.5Q608.8 601 611.2 601ZM619.2 603.8L621.9 603.8Q624.4 603.8 623.8 606.2L604.1 695Q603.5 697.5 601 697.5L598.3 697.5Q595.8 697.5 596.4 695L616.1 606.2Q616.7 603.8 619.2 603.8Z" fill="#fff" stroke="#1c1c1c" stroke-width="1.45" stroke-linejoin="round"/><path d="M377.5 552 C379 549.5 384 549.5 392 549 C400 548.5 410 549 420 551 C436 554 452 558.5 472 564.5M376 660.5 C385 661.5 392 659.5 402 659.5 C412 659.5 420 660 430 661.5 C442 663.5 452 665.5 461 666.5M388.8 549.5 Q387.8 590 382.5 638.5M400.2 549.5 Q399.2 590 394 638.5M412.7 549.7 Q411.7 590 405.4 638.5M422 552 Q421 590 414.8 638.5M431.5 554.4 Q430.5 590 423 638.5M440.8 556.7 Q439.8 590 431.5 638.5M450.2 559 Q449.2 590 439.8 638.5M457.5 560.9 Q456.5 590 450.2 664M465.8 563 Q464.8 590 456.5 664M382.5 635 C382.5 630.5 455.5 630.5 455.5 635 C455.5 639.5 382.5 639.5 382.5 635Z" fill="none" stroke="#8a8a8a" stroke-width="0.7"/><path fill="#222" d="M89.2 604.1h1.1v1.1h-1.1zM89.2 606.8h1.1v1.1h-1.1zM91.5 604.1h1.1v1.1h-1.1zM91.5 606.8h1.1v1.1h-1.1zM91.3 636.6h1.1v1.1h-1.1zM91.3 639.3h1.1v1.1h-1.1zM93.6 636.6h1.1v1.1h-1.1zM93.6 639.3h1.1v1.1h-1.1zM102 604.6h1.1v1.1h-1.1zM102 607.3h1.1v1.1h-1.1zM104.2 604.6h1.1v1.1h-1.1zM104.2 607.3h1.1v1.1h-1.1zM103.8 637.1h1.1v1.1h-1.1zM103.8 639.8h1.1v1.1h-1.1zM106.1 637.1h1.1v1.1h-1.1zM106.1 639.8h1.1v1.1h-1.1zM113.5 604.6h1.1v1.1h-1.1zM113.5 607.3h1.1v1.1h-1.1zM115.8 604.6h1.1v1.1h-1.1zM115.8 607.3h1.1v1.1h-1.1zM115.2 637.1h1.1v1.1h-1.1zM115.2 639.8h1.1v1.1h-1.1zM117.5 637.1h1.1v1.1h-1.1zM117.5 639.8h1.1v1.1h-1.1zM125 604.6h1.1v1.1h-1.1zM125 607.3h1.1v1.1h-1.1zM127.3 604.6h1.1v1.1h-1.1zM127.3 607.3h1.1v1.1h-1.1zM126.6 637.1h1.1v1.1h-1.1zM126.6 639.8h1.1v1.1h-1.1zM129 637.1h1.1v1.1h-1.1zM129 639.8h1.1v1.1h-1.1zM136.4 604.6h1.1v1.1h-1.1zM136.4 607.3h1.1v1.1h-1.1zM138.7 604.6h1.1v1.1h-1.1zM138.7 607.3h1.1v1.1h-1.1zM138.1 637.1h1.1v1.1h-1.1zM138.1 639.8h1.1v1.1h-1.1zM140.4 637.1h1.1v1.1h-1.1zM140.4 639.8h1.1v1.1h-1.1zM148.7 604.6h1.1v1.1h-1.1zM148.7 607.3h1.1v1.1h-1.1zM151 604.6h1.1v1.1h-1.1zM151 607.3h1.1v1.1h-1.1zM150.2 638.1h1.1v1.1h-1.1zM150.2 640.8h1.1v1.1h-1.1zM152.5 638.1h1.1v1.1h-1.1zM152.5 640.8h1.1v1.1h-1.1zM163.1 604.6h1.1v1.1h-1.1zM163.1 607.3h1.1v1.1h-1.1zM165.4 604.6h1.1v1.1h-1.1zM165.4 607.3h1.1v1.1h-1.1zM164.3 639.1h1.1v1.1h-1.1zM164.3 641.8h1.1v1.1h-1.1zM166.6 639.1h1.1v1.1h-1.1zM166.6 641.8h1.1v1.1h-1.1zM178 604.6h1.1v1.1h-1.1zM178 607.3h1.1v1.1h-1.1zM180.3 604.6h1.1v1.1h-1.1zM180.3 607.3h1.1v1.1h-1.1zM178 640.1h1.1v1.1h-1.1zM178 642.8h1.1v1.1h-1.1zM180.3 640.1h1.1v1.1h-1.1zM180.3 642.8h1.1v1.1h-1.1zM193.6 601.6h1.1v1.1h-1.1zM193.6 604.3h1.1v1.1h-1.1zM195.9 601.6h1.1v1.1h-1.1zM195.9 604.3h1.1v1.1h-1.1zM193.6 641.1h1.1v1.1h-1.1zM193.6 643.8h1.1v1.1h-1.1zM195.9 641.1h1.1v1.1h-1.1zM195.9 643.8h1.1v1.1h-1.1zM209.2 602.1h1.1v1.1h-1.1zM209.2 604.8h1.1v1.1h-1.1zM211.5 602.1h1.1v1.1h-1.1zM211.5 604.8h1.1v1.1h-1.1zM209.2 641.1h1.1v1.1h-1.1zM209.2 643.8h1.1v1.1h-1.1zM211.5 641.1h1.1v1.1h-1.1zM211.5 643.8h1.1v1.1h-1.1zM224.8 602.1h1.1v1.1h-1.1zM224.8 604.8h1.1v1.1h-1.1zM227.2 602.1h1.1v1.1h-1.1zM227.2 604.8h1.1v1.1h-1.1zM224.8 641.6h1.1v1.1h-1.1zM224.8 644.3h1.1v1.1h-1.1zM227.2 641.6h1.1v1.1h-1.1zM227.2 644.3h1.1v1.1h-1.1zM240.2 602.1h1.1v1.1h-1.1zM240.2 604.8h1.1v1.1h-1.1zM242.5 602.1h1.1v1.1h-1.1zM242.5 604.8h1.1v1.1h-1.1zM240.2 644.1h1.1v1.1h-1.1zM240.2 646.8h1.1v1.1h-1.1zM242.5 644.1h1.1v1.1h-1.1zM242.5 646.8h1.1v1.1h-1.1zM255.3 602.6h1.1v1.1h-1.1zM255.3 605.3h1.1v1.1h-1.1zM257.6 602.6h1.1v1.1h-1.1zM257.6 605.3h1.1v1.1h-1.1zM255.3 646.1h1.1v1.1h-1.1zM255.3 648.8h1.1v1.1h-1.1zM257.6 646.1h1.1v1.1h-1.1zM257.6 648.8h1.1v1.1h-1.1zM270.6 603.6h1.1v1.1h-1.1zM270.6 606.3h1.1v1.1h-1.1zM272.9 603.6h1.1v1.1h-1.1zM272.9 606.3h1.1v1.1h-1.1zM270.6 648.1h1.1v1.1h-1.1zM270.6 650.8h1.1v1.1h-1.1zM272.9 648.1h1.1v1.1h-1.1zM272.9 650.8h1.1v1.1h-1.1zM286.2 603.6h1.1v1.1h-1.1zM286.2 606.3h1.1v1.1h-1.1zM288.5 603.6h1.1v1.1h-1.1zM288.5 606.3h1.1v1.1h-1.1zM286.2 648.6h1.1v1.1h-1.1zM286.2 651.3h1.1v1.1h-1.1zM288.5 648.6h1.1v1.1h-1.1zM288.5 651.3h1.1v1.1h-1.1zM301.9 603.6h1.1v1.1h-1.1zM301.9 606.3h1.1v1.1h-1.1zM304.2 603.6h1.1v1.1h-1.1zM304.2 606.3h1.1v1.1h-1.1zM301.9 648.6h1.1v1.1h-1.1zM301.9 651.3h1.1v1.1h-1.1zM304.2 648.6h1.1v1.1h-1.1zM304.2 651.3h1.1v1.1h-1.1zM317.5 603.6h1.1v1.1h-1.1zM317.5 606.3h1.1v1.1h-1.1zM319.8 603.6h1.1v1.1h-1.1zM319.8 606.3h1.1v1.1h-1.1zM317.5 648.6h1.1v1.1h-1.1zM317.5 651.3h1.1v1.1h-1.1zM319.8 648.6h1.1v1.1h-1.1zM319.8 651.3h1.1v1.1h-1.1zM331.8 603.6h1.1v1.1h-1.1zM331.8 606.3h1.1v1.1h-1.1zM334.1 603.6h1.1v1.1h-1.1zM334.1 606.3h1.1v1.1h-1.1zM331.8 648.6h1.1v1.1h-1.1zM331.8 651.3h1.1v1.1h-1.1zM334.1 648.6h1.1v1.1h-1.1zM334.1 651.3h1.1v1.1h-1.1zM343.5 603.6h1.1v1.1h-1.1zM343.5 606.3h1.1v1.1h-1.1zM345.8 603.6h1.1v1.1h-1.1zM345.8 606.3h1.1v1.1h-1.1zM343.5 648.6h1.1v1.1h-1.1zM343.5 651.3h1.1v1.1h-1.1zM345.8 648.6h1.1v1.1h-1.1zM345.8 651.3h1.1v1.1h-1.1zM356.5 603.6h1.1v1.1h-1.1zM356.5 606.3h1.1v1.1h-1.1zM358.8 603.6h1.1v1.1h-1.1zM358.8 606.3h1.1v1.1h-1.1zM356.5 648.6h1.1v1.1h-1.1zM356.5 651.3h1.1v1.1h-1.1zM358.8 648.6h1.1v1.1h-1.1zM358.8 651.3h1.1v1.1h-1.1zM369.5 603.6h1.1v1.1h-1.1zM369.5 606.3h1.1v1.1h-1.1zM371.8 603.6h1.1v1.1h-1.1zM371.8 606.3h1.1v1.1h-1.1zM369.5 648.1h1.1v1.1h-1.1zM369.5 650.8h1.1v1.1h-1.1zM371.8 648.1h1.1v1.1h-1.1zM371.8 650.8h1.1v1.1h-1.1zM468.1 608.6h1.1v1.1h-1.1zM468.1 611.1h1.1v1.1h-1.1zM470.3 608.6h1.1v1.1h-1.1zM470.3 611.1h1.1v1.1h-1.1zM471.3 647.8h1.1v1.1h-1.1zM471.3 650.3h1.1v1.1h-1.1zM473.5 647.8h1.1v1.1h-1.1zM473.5 650.3h1.1v1.1h-1.1zM476.4 609.8h1.1v1.1h-1.1zM476.4 612.3h1.1v1.1h-1.1zM478.6 609.8h1.1v1.1h-1.1zM478.6 612.3h1.1v1.1h-1.1zM478.8 649h1.1v1.1h-1.1zM478.8 651.5h1.1v1.1h-1.1zM481 649h1.1v1.1h-1.1zM481 651.5h1.1v1.1h-1.1zM484.7 611.2h1.1v1.1h-1.1zM484.7 613.7h1.1v1.1h-1.1zM486.9 611.2h1.1v1.1h-1.1zM486.9 613.7h1.1v1.1h-1.1zM486.4 650.5h1.1v1.1h-1.1zM486.4 653h1.1v1.1h-1.1zM488.6 650.5h1.1v1.1h-1.1zM488.6 653h1.1v1.1h-1.1zM493 612.7h1.1v1.1h-1.1zM493 615.2h1.1v1.1h-1.1zM495.2 612.7h1.1v1.1h-1.1zM495.2 615.2h1.1v1.1h-1.1zM494 652h1.1v1.1h-1.1zM494 654.5h1.1v1.1h-1.1zM496.2 652h1.1v1.1h-1.1zM496.2 654.5h1.1v1.1h-1.1zM501.2 614.3h1.1v1.1h-1.1zM501.2 616.8h1.1v1.1h-1.1zM503.4 614.3h1.1v1.1h-1.1zM503.4 616.8h1.1v1.1h-1.1zM501.6 653.6h1.1v1.1h-1.1zM501.6 656.1h1.1v1.1h-1.1zM503.8 653.6h1.1v1.1h-1.1zM503.8 656.1h1.1v1.1h-1.1zM509.5 616h1.1v1.1h-1.1zM509.5 618.5h1.1v1.1h-1.1zM511.7 616h1.1v1.1h-1.1zM511.7 618.5h1.1v1.1h-1.1zM509.1 655.2h1.1v1.1h-1.1zM509.1 657.7h1.1v1.1h-1.1zM511.3 655.2h1.1v1.1h-1.1zM511.3 657.7h1.1v1.1h-1.1zM517.8 617.7h1.1v1.1h-1.1zM517.8 620.2h1.1v1.1h-1.1zM520 617.7h1.1v1.1h-1.1zM520 620.2h1.1v1.1h-1.1zM516.7 656.9h1.1v1.1h-1.1zM516.7 659.4h1.1v1.1h-1.1zM518.9 656.9h1.1v1.1h-1.1zM518.9 659.4h1.1v1.1h-1.1zM526 619.5h1.1v1.1h-1.1zM526 622h1.1v1.1h-1.1zM528.2 619.5h1.1v1.1h-1.1zM528.2 622h1.1v1.1h-1.1zM524.3 658.5h1.1v1.1h-1.1zM524.3 661h1.1v1.1h-1.1zM526.5 658.5h1.1v1.1h-1.1zM526.5 661h1.1v1.1h-1.1zM534.3 621.3h1.1v1.1h-1.1zM534.3 623.8h1.1v1.1h-1.1zM536.5 621.3h1.1v1.1h-1.1zM536.5 623.8h1.1v1.1h-1.1zM531.9 660.2h1.1v1.1h-1.1zM531.9 662.7h1.1v1.1h-1.1zM534.1 660.2h1.1v1.1h-1.1zM534.1 662.7h1.1v1.1h-1.1zM542.6 623.2h1.1v1.1h-1.1zM542.6 625.7h1.1v1.1h-1.1zM544.8 623.2h1.1v1.1h-1.1zM544.8 625.7h1.1v1.1h-1.1zM539.4 662h1.1v1.1h-1.1zM539.4 664.5h1.1v1.1h-1.1zM541.6 662h1.1v1.1h-1.1zM541.6 664.5h1.1v1.1h-1.1zM550.9 625h1.1v1.1h-1.1zM550.9 627.5h1.1v1.1h-1.1zM553.1 625h1.1v1.1h-1.1zM553.1 627.5h1.1v1.1h-1.1zM547 663.7h1.1v1.1h-1.1zM547 666.2h1.1v1.1h-1.1zM549.2 663.7h1.1v1.1h-1.1zM549.2 666.2h1.1v1.1h-1.1zM559.1 626.9h1.1v1.1h-1.1zM559.1 629.4h1.1v1.1h-1.1zM561.3 626.9h1.1v1.1h-1.1zM561.3 629.4h1.1v1.1h-1.1zM554.6 665.5h1.1v1.1h-1.1zM554.6 668h1.1v1.1h-1.1zM556.8 665.5h1.1v1.1h-1.1zM556.8 668h1.1v1.1h-1.1zM567.4 628.9h1.1v1.1h-1.1zM567.4 631.4h1.1v1.1h-1.1zM569.6 628.9h1.1v1.1h-1.1zM569.6 631.4h1.1v1.1h-1.1zM562.1 667.2h1.1v1.1h-1.1zM562.1 669.7h1.1v1.1h-1.1zM564.3 667.2h1.1v1.1h-1.1zM564.3 669.7h1.1v1.1h-1.1zM575.7 630.8h1.1v1.1h-1.1zM575.7 633.3h1.1v1.1h-1.1zM577.9 630.8h1.1v1.1h-1.1zM577.9 633.3h1.1v1.1h-1.1zM569.7 669h1.1v1.1h-1.1zM569.7 671.5h1.1v1.1h-1.1zM571.9 669h1.1v1.1h-1.1zM571.9 671.5h1.1v1.1h-1.1zM584 632.8h1.1v1.1h-1.1zM584 635.3h1.1v1.1h-1.1zM586.2 632.8h1.1v1.1h-1.1zM586.2 635.3h1.1v1.1h-1.1zM577.3 670.8h1.1v1.1h-1.1zM577.3 673.3h1.1v1.1h-1.1zM579.5 670.8h1.1v1.1h-1.1zM579.5 673.3h1.1v1.1h-1.1zM592.2 634.8h1.1v1.1h-1.1zM592.2 637.3h1.1v1.1h-1.1zM594.4 634.8h1.1v1.1h-1.1zM594.4 637.3h1.1v1.1h-1.1zM584.9 672.7h1.1v1.1h-1.1zM584.9 675.2h1.1v1.1h-1.1zM587.1 672.7h1.1v1.1h-1.1zM587.1 675.2h1.1v1.1h-1.1zM600.5 636.8h1.1v1.1h-1.1zM600.5 639.3h1.1v1.1h-1.1zM602.7 636.8h1.1v1.1h-1.1zM602.7 639.3h1.1v1.1h-1.1zM592.4 674.5h1.1v1.1h-1.1zM592.4 677h1.1v1.1h-1.1zM594.6 674.5h1.1v1.1h-1.1zM594.6 677h1.1v1.1h-1.1zM608.8 638.8h1.1v1.1h-1.1zM608.8 641.3h1.1v1.1h-1.1zM611 638.8h1.1v1.1h-1.1zM611 641.3h1.1v1.1h-1.1zM600 676.3h1.1v1.1h-1.1zM600 678.8h1.1v1.1h-1.1zM602.2 676.3h1.1v1.1h-1.1zM602.2 678.8h1.1v1.1h-1.1zM376.6 645.2h1.1v1.1h-1.1zM376.6 647.7h1.1v1.1h-1.1zM378.8 645.2h1.1v1.1h-1.1zM378.8 647.7h1.1v1.1h-1.1zM388.1 645.4h1.1v1.1h-1.1zM388.1 647.9h1.1v1.1h-1.1zM390.3 645.4h1.1v1.1h-1.1zM390.3 647.9h1.1v1.1h-1.1zM399.6 645.7h1.1v1.1h-1.1zM399.6 648.2h1.1v1.1h-1.1zM401.8 645.7h1.1v1.1h-1.1zM401.8 648.2h1.1v1.1h-1.1zM408.9 645.9h1.1v1.1h-1.1zM408.9 648.4h1.1v1.1h-1.1zM411.1 645.9h1.1v1.1h-1.1zM411.1 648.4h1.1v1.1h-1.1zM417.3 646h1.1v1.1h-1.1zM417.3 648.5h1.1v1.1h-1.1zM419.5 646h1.1v1.1h-1.1zM419.5 648.5h1.1v1.1h-1.1zM425.6 646.2h1.1v1.1h-1.1zM425.6 648.7h1.1v1.1h-1.1zM427.8 646.2h1.1v1.1h-1.1zM427.8 648.7h1.1v1.1h-1.1zM434.6 646.4h1.1v1.1h-1.1zM434.6 648.9h1.1v1.1h-1.1zM436.8 646.4h1.1v1.1h-1.1zM436.8 648.9h1.1v1.1h-1.1zM440.6 646.5h1.1v1.1h-1.1zM440.6 649h1.1v1.1h-1.1zM442.8 646.5h1.1v1.1h-1.1zM442.8 649h1.1v1.1h-1.1zM449.6 646.7h1.1v1.1h-1.1zM449.6 649.2h1.1v1.1h-1.1zM451.8 646.7h1.1v1.1h-1.1zM451.8 649.2h1.1v1.1h-1.1zM456.2 646.8h1.1v1.1h-1.1zM456.2 649.3h1.1v1.1h-1.1zM458.4 646.8h1.1v1.1h-1.1zM458.4 649.3h1.1v1.1h-1.1z"/><path d="M379.8 604.5l-.4 2.6M391.9 604.5l-.4 2.6M402.9 604.5l-.4 2.6M412.3 604.5l-.4 2.6M420.6 604.5l-.4 2.6M429 604.5l-.4 2.6M436.7 604.5l-.4 2.6M445.4 604.5l-.4 2.6M454 604.5l-.4 2.6M461.7 604.5l-.4 2.6" stroke="#666" stroke-width=".7" fill="none"/><g fill="none" stroke="#777" stroke-width=".7"><rect x="177.8" y="638.4" width="5.2" height="7.2" rx="1.6"/><rect x="191.9" y="638.9" width="5.2" height="7.2" rx="1.6"/><rect x="206.9" y="639.9" width="5.2" height="7.2" rx="1.6"/><rect x="223.4" y="642.4" width="5.2" height="7.2" rx="1.6"/><rect x="352.1" y="647" width="4.8" height="6.6" rx="1.6"/><rect x="387.4" y="643.9" width="4.8" height="6.6" rx="1.6"/><rect x="398.9" y="644.2" width="4.8" height="6.6" rx="1.6"/><rect x="416.6" y="644.7" width="4.8" height="6.6" rx="1.6"/><rect x="439.9" y="645.2" width="4.8" height="6.6" rx="1.6"/></g><path d="M258.3 610.5q-1.6 2.4 0 5" fill="none" stroke="#444" stroke-width=".8"/></svg></div></div>

  <div id="list" class="abs">
   <div class="abs" style="left:0;top:0;width:235px;height:23px;background:linear-gradient(#fff 0,#fff 45%,#f7f8fa 50%,#f1f2f4 100%);border-bottom:1px solid #d5d5d5;box-sizing:border-box"></div>
   <div class="abs" style="left:201px;top:0;width:1px;height:22px;background:linear-gradient(#f2f2f2,#dedfe1)"></div>
   <div class="abs" style="left:234px;top:0;width:1px;height:22px;background:linear-gradient(#f2f2f2,#dedfe1)"></div>
   <div class="abs li" style="top:3px;left:7px">Ime</div>
   <div class="abs" style="left:5px;top:25px;width:196px;height:18px;background:#8cb33e"></div>
   <div class="abs li" style="top:25px;letter-spacing:0.077px">Allolobophora (s.l.) altimontana</div><div class="abs li" style="top:44px;letter-spacing:0.057px">Allolobophora (s. l.) leoni</div><div class="abs li" style="top:63px;letter-spacing:-0.046px">Allolobophora (s. l.) sturanyi stura...</div><div class="abs li" style="top:82px;letter-spacing:0.149px">Allolobophora chlorotica chlorotica</div><div class="abs li" style="top:101px;letter-spacing:0.052px">Allolobophoridella eiseni</div><div class="abs li" style="top:120px;letter-spacing:-0.087px">Aporrectodea (s. l.) dubiosa</div><div class="abs li" style="top:139px;letter-spacing:-0.028px">Aporrectodea caliginosa</div><div class="abs li" style="top:158px;letter-spacing:0.052px">Aporrectodea georgii</div><div class="abs li" style="top:177px;letter-spacing:0.035px">Aporrectodea handlirschi</div><div class="abs li" style="top:196px;letter-spacing:-0.206px">Aporrectodea jassyensis</div><div class="abs li" style="top:215px;letter-spacing:0.025px">Aporrectodea longa</div><div class="abs li" style="top:234px;letter-spacing:0.006px">Aporrectodea pannoniella</div><div class="abs li" style="top:253px;letter-spacing:-0.066px">Aporrectodea papukiana</div>
   <div class="abs sb" style="left:235px;top:0;width:17px;height:267px"></div>
   <div class="abs thumb" style="left:236px;top:19px;width:15px;height:35px"></div>
   <svg class="abs" style="left:235px;top:0" width="17" height="267"><path d="M4.5 11.5L8.5 7 12.5 11.5z M4.5 255L12.5 255 8.5 259.5z" fill="#4d4d4d"/><path d="M5 33.5h7M5 36.5h7M5 39.5h7" stroke="#6b6b6b" stroke-width="1"/></svg>
  </div>

  <div id="status" class="abs"></div>
 </div>
</div>
</body>
</html>
